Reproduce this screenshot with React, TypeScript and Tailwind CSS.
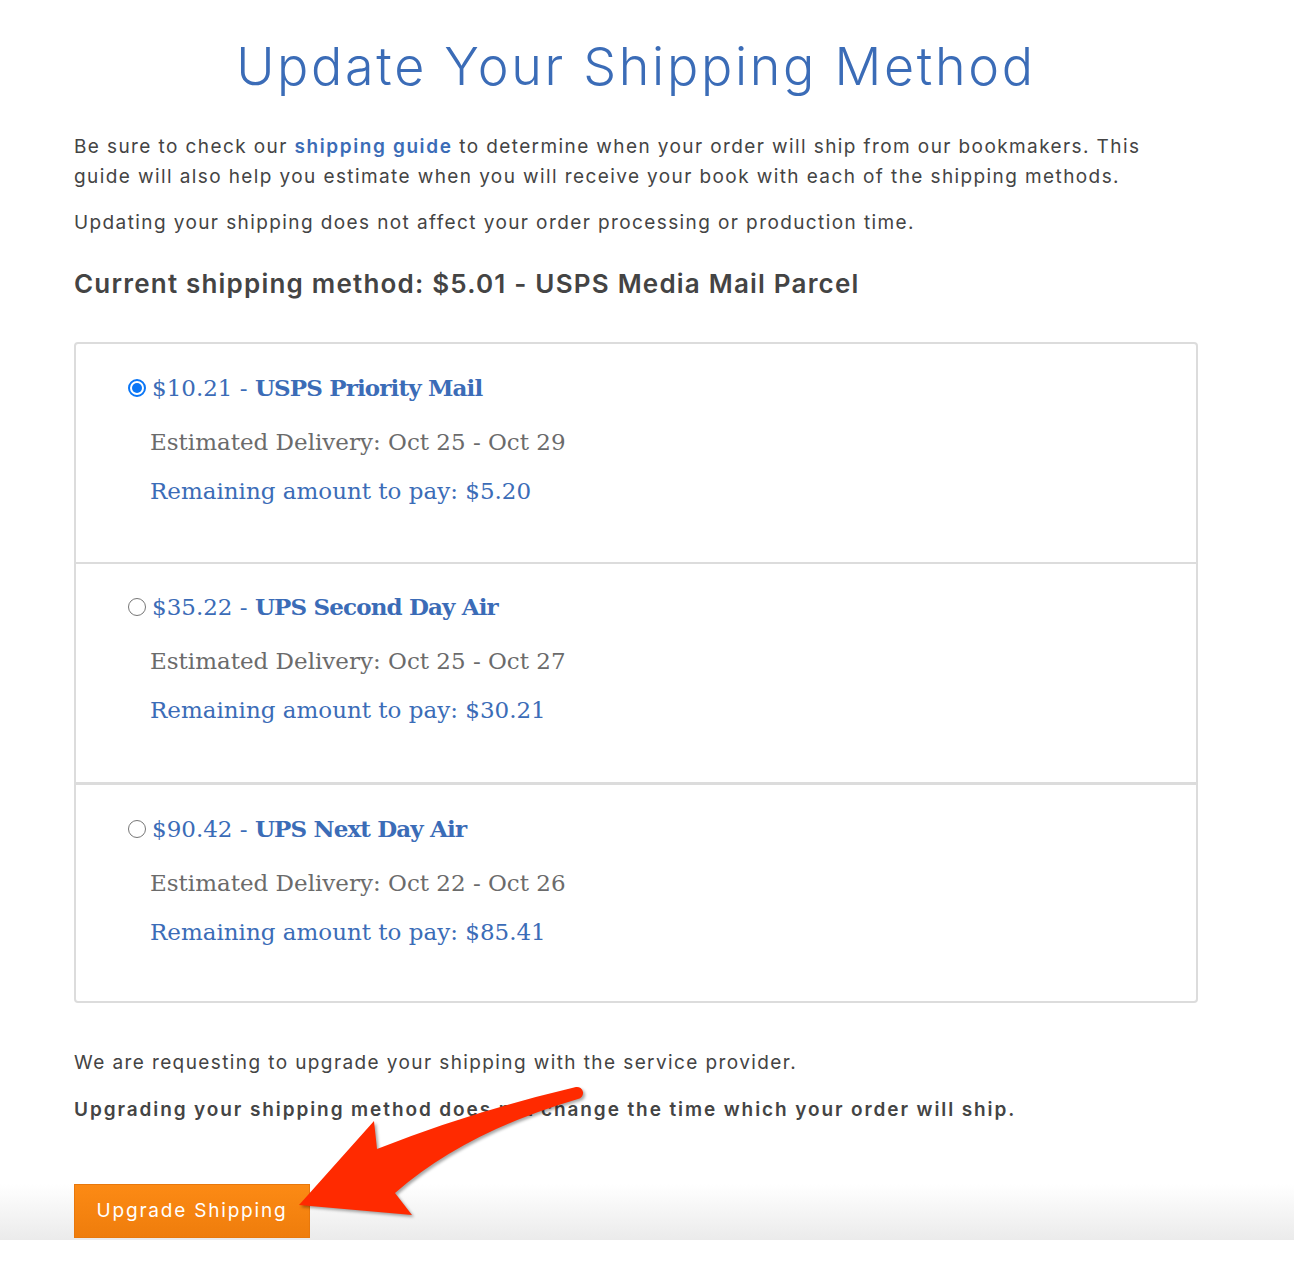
import React from "react";

const sans = { fontFamily: "Inter, 'Noto Sans', sans-serif" };
const serif = { fontFamily: "'DejaVu Serif', 'Liberation Serif', serif" };

function Radio({ checked }: { checked: boolean }) {
  if (checked) {
    return (
      <span className="inline-flex h-[18px] w-[18px] items-center justify-center rounded-full border-2 border-[#0a76f6] bg-white">
        <span className="h-[10px] w-[10px] rounded-full bg-[#0a76f6]" />
      </span>
    );
  }
  return <span className="inline-block h-[18px] w-[18px] rounded-full border border-[#767676] bg-white" />;
}

const options = [
  { price: "$10.21", name: "USPS Priority Mail", est: "Oct 25 - Oct 29", rem: "$5.20", checked: true, cls: "h-[218px] pt-[27px]" },
  { price: "$35.22", name: "UPS Second Day Air", est: "Oct 25 - Oct 27", rem: "$30.21", checked: false, cls: "h-[220px] border-t-2 border-[#dcdcdc] pt-[26px]" },
  { price: "$90.42", name: "UPS Next Day Air", est: "Oct 22 - Oct 26", rem: "$85.41", checked: false, cls: "h-[219px] border-t-[3px] border-[#dcdcdc] pt-[27px]" },
];

export default function App() {
  return (
    <div className="relative w-full bg-white text-[#444]" style={sans}>
      <div className="ml-[74px] w-[1124px] pt-[37px]">
        <h1 className="text-center text-[52px] font-light leading-[60px] tracking-[2.7px] text-[#3b6cb7]">
          Update Your Shipping Method
        </h1>
        <p className="mt-[35px] text-[19px] leading-[30px] tracking-[1.4px]">
          Be sure to check our <span className="font-semibold tracking-[1.6px] text-[#3b6cb7]">shipping guide</span> to determine when your order will ship from our bookmakers. This guide will also help you estimate when you will receive your book with each of the shipping methods.
        </p>
        <p className="mt-[16px] text-[19px] leading-[30px] tracking-[1.4px]">
          Updating your shipping does not affect your order processing or production time.
        </p>
        <h2 className="mt-[29px] text-[26px] font-semibold leading-[34px] tracking-[1.2px] text-[#444]">
          Current shipping method: $5.01 - USPS Media Mail Parcel
        </h2>
        <div className="mt-[41px] rounded-[4px] border-2 border-[#dcdcdc]" style={serif}>
          {options.map((o) => (
            <div key={o.name} className={"pl-[52px] " + o.cls}>
              <div className="flex h-[34px] items-center text-[23px] leading-[34px] text-[#3b6cb7]">
                <span className="mr-[6px] flex items-center">
                  <Radio checked={o.checked} />
                </span>
                <span>
                  {o.price} - <span className="font-bold tracking-[-0.85px]">{o.name}</span>
                </span>
              </div>
              <div className="mt-[20px] pl-[22px] text-[23px] leading-[34px] text-[#6b6b6b]">
                Estimated Delivery: {o.est}
              </div>
              <div className="mt-[15px] pl-[22px] text-[23px] leading-[34px] text-[#3b6cb7]">
                Remaining amount to pay: {o.rem}
              </div>
            </div>
          ))}
        </div>
        <p className="mt-[45px] text-[19px] leading-[30px] tracking-[1.4px]">
          We are requesting to upgrade your shipping with the service provider.
        </p>
        <p className="mt-[17px] text-[19px] font-semibold leading-[30px] tracking-[1.9px]">
          Upgrading your shipping method does not change the time which your order will ship.
        </p>
      </div>
      <div className="mt-[59px] h-[56px] w-full bg-gradient-to-b from-white to-[#ebebeb] pl-[74px]">
        <button className="flex h-[54px] w-[236px] items-center justify-center border border-[#e8780c] bg-gradient-to-b from-[#fc8a14] to-[#ef7d0c] text-[19px] tracking-[1.8px] text-white">
          Upgrade Shipping
        </button>
      </div>
      <div className="h-[41px]" />
      <svg
        className="pointer-events-none absolute left-0 top-0"
        width="1294"
        height="1282"
        viewBox="0 0 1294 1282"
        style={{ filter: "drop-shadow(2px 2px 1.5px rgba(0,0,0,0.35))" }}
      >
        <path
          d="M 576 1087 Q 470 1112 377 1149 L 374 1121 L 299 1205 L 412 1215 L 395 1193 Q 465 1132 578 1099 A 6 6 0 0 0 576 1087 Z"
          fill="#ff2a00"
        />
      </svg>
    </div>
  );
}
